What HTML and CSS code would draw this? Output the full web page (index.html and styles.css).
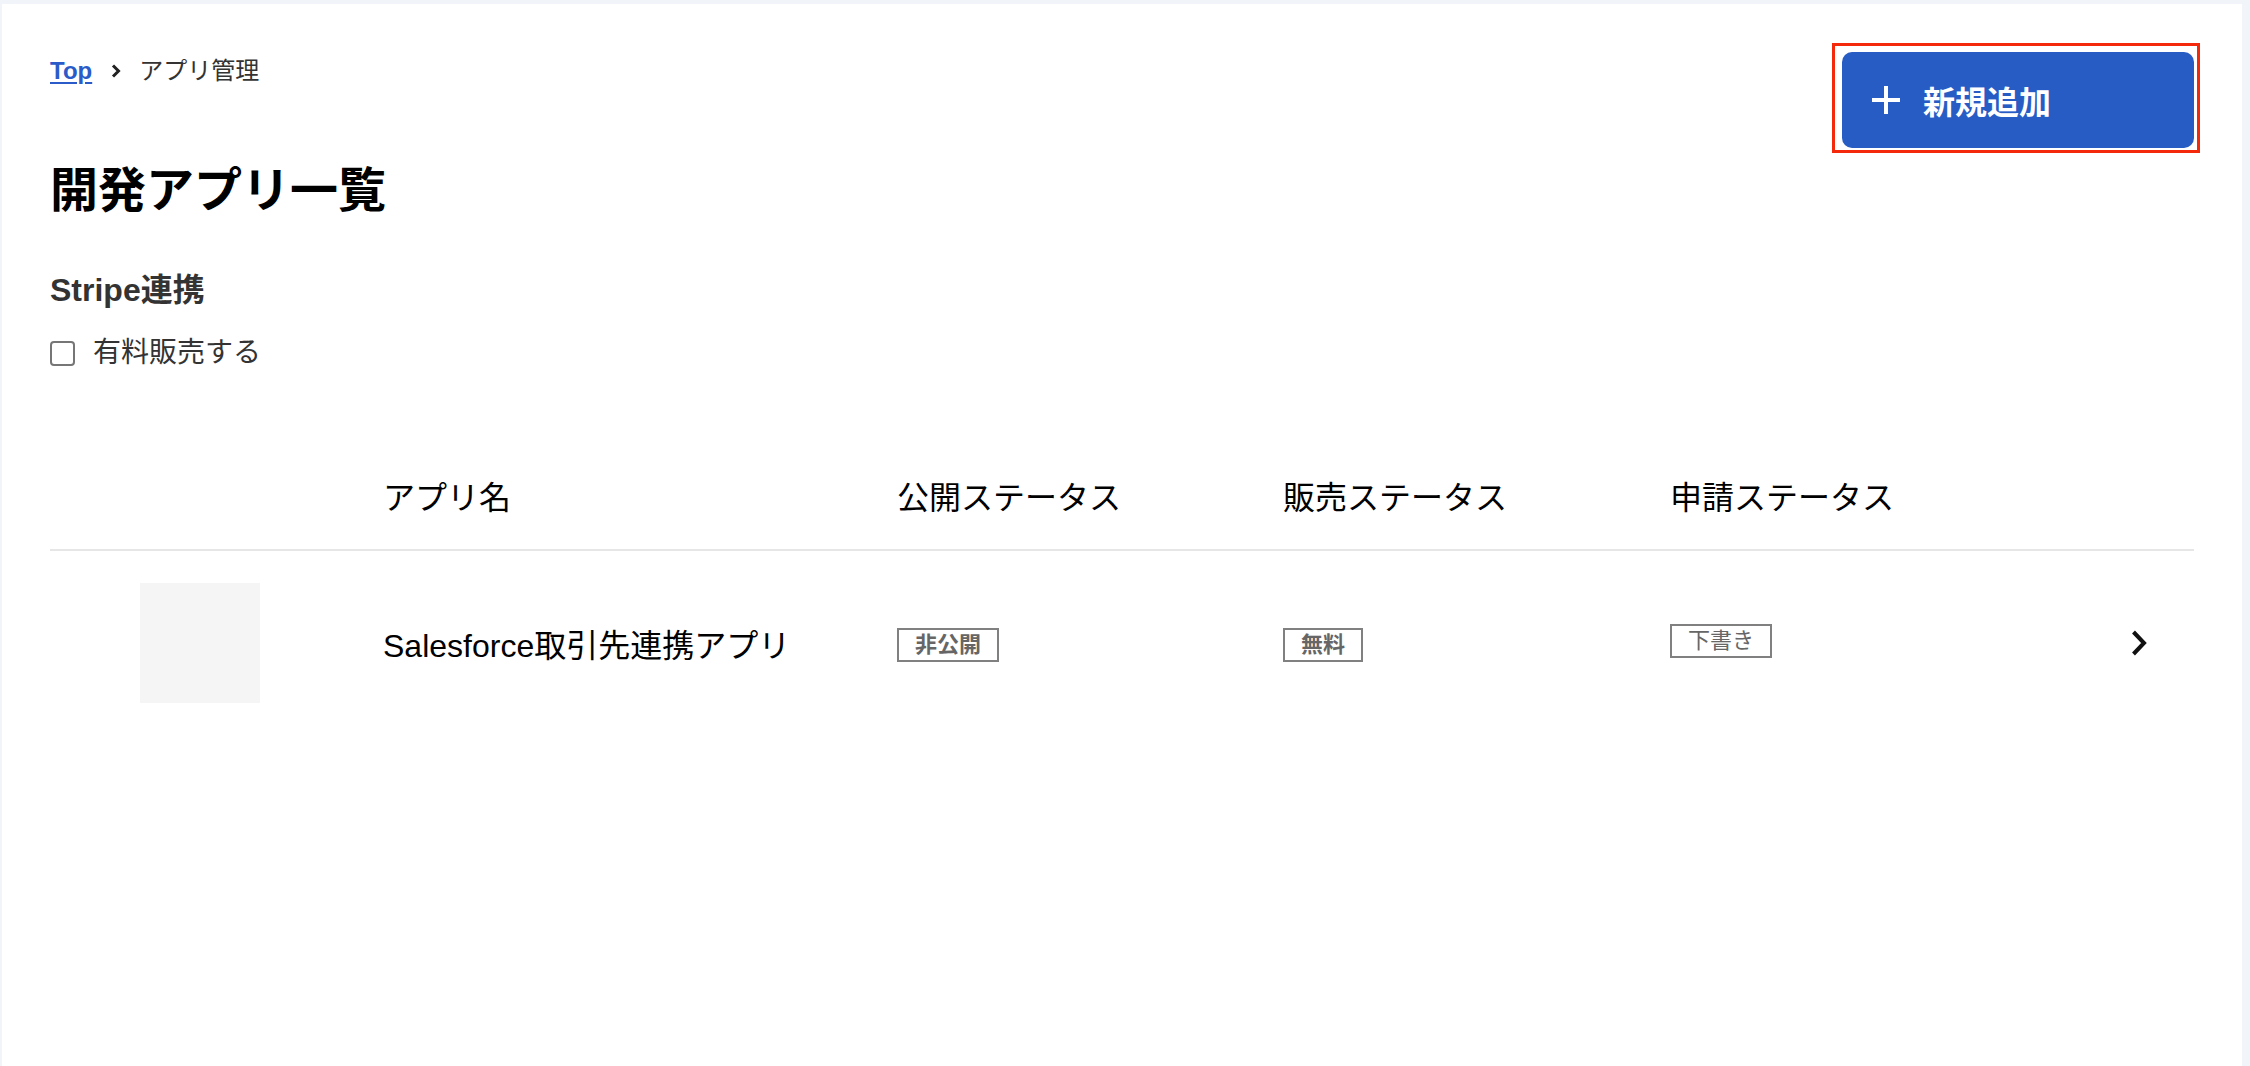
FILE: index.html
```html
<!DOCTYPE html>
<html lang="ja">
<head>
    <meta charset="UTF-8">
    <meta name="viewport" content="width=device-width, initial-scale=1.0">
    <title>開発アプリ一覧</title>
    <link rel="stylesheet" href="styles.css">
</head>
<body>
    <div class="panel">
        <div class="top-bar">
            <nav class="breadcrumb">
                <a href="#" class="crumb-link">Top</a>
                <svg class="crumb-sep" width="10" height="14" viewBox="0 0 10 14"><path d="M2 1.5 L7.5 7 L2 12.5" fill="none" stroke="#222" stroke-width="3"/></svg>
                <span class="crumb-current">アプリ管理</span>
            </nav>
            <div class="highlight">
                <button class="add-btn">
                    <svg width="28" height="28" viewBox="0 0 28 28"><path d="M14 0 V28 M0 14 H28" stroke="#fff" stroke-width="4"/></svg>
                    <span>新規追加</span>
                </button>
            </div>
        </div>

        <h1 class="page-title">開発アプリ一覧</h1>

        <h2 class="section-title">Stripe連携</h2>
        <label class="check-row">
            <input type="checkbox" class="check">
            <span>有料販売する</span>
        </label>

        <div class="app-table">
            <div class="row head">
                <div></div>
                <div>アプリ名</div>
                <div>公開ステータス</div>
                <div>販売ステータス</div>
                <div>申請ステータス</div>
                <div></div>
            </div>
            <div class="row item">
                <div class="thumb-cell"><div class="thumb"></div></div>
                <div class="app-name">Salesforce取引先連携アプリ</div>
                <div><span class="badge bold">非公開</span></div>
                <div><span class="badge bold">無料</span></div>
                <div><span class="badge draft">下書き</span></div>
                <div class="arrow-cell">
                    <svg width="16" height="26" viewBox="0 0 16 26"><path d="M2.5 2 L13 13 L2.5 24" fill="none" stroke="#111" stroke-width="4"/></svg>
                </div>
            </div>
        </div>
    </div>
</body>
</html>
```

FILE: styles.css
```css
* { box-sizing: border-box; }
body {
    margin: 0;
    background: #f1f4f8;
    font-family: "Liberation Sans", "Noto Sans CJK JP", sans-serif;
    color: #000;
}
.panel {
    background: #fff;
    margin: 4px 8px 0 2px;
    min-height: calc(100vh - 4px);
    padding: 48px 48px 0 48px;
}

.top-bar { display: flex; justify-content: space-between; align-items: flex-start; }
.breadcrumb { display: flex; align-items: center; font-size: 24px; line-height: 38px; }
.crumb-link { color: #2a5bc8; font-weight: bold; text-decoration: underline; text-underline-offset: 3px; }
.crumb-sep { margin: 0 18px 0 19px; }
.crumb-current { color: #333; }

.highlight { position: relative; }
.highlight::after {
    content: "";
    position: absolute;
    top: -9px; left: -10px; right: -6px; bottom: -5px;
    border: 3px solid #f4290c;
    pointer-events: none;
}
.add-btn {
    display: flex;
    align-items: center;
    gap: 23px;
    width: 352px;
    height: 96px;
    padding: 0 0 0 30px;
    background: #275cc5;
    color: #fff;
    border: none;
    border-radius: 10px;
    font-family: inherit;
    font-size: 32px;
    font-weight: bold;
}

.page-title { margin: 11px 0 0; font-size: 48px; line-height: 64px; font-weight: bold; }
.section-title { margin: 45px 0 0; font-size: 32px; line-height: 44px; font-weight: bold; color: #333; }
.check-row { display: flex; align-items: center; gap: 18px; margin-top: 21px; font-size: 28px; line-height: 40px; color: #333; }
.check {
    appearance: none;
    margin: 0;
    width: 25px;
    height: 25px;
    border: 2px solid #767676;
    border-radius: 4px;
}

.app-table { margin-top: 67px; }
.row {
    display: grid;
    grid-template-columns: 333px 514px 386px 387px 1fr 94px;
    align-items: center;
}
.row.head { height: 111px; font-size: 32px; border-bottom: 2px solid #e6e6e6; }
.row.item { padding: 32px 0; font-size: 32px; }
.thumb-cell { padding-left: 90px; }
.thumb { width: 120px; height: 120px; background: #f5f5f5; }
.badge {
    display: inline-block;
    height: 34px;
    line-height: 30px;
    padding: 0 16px;
    border: 2px solid #808080;
    font-size: 22px;
    color: #666;
    vertical-align: middle;
}
.badge.bold { font-weight: bold; }
.badge.draft { position: relative; top: -4px; }
.arrow-cell { display: flex; justify-content: flex-end; padding-right: 47px; }
```
